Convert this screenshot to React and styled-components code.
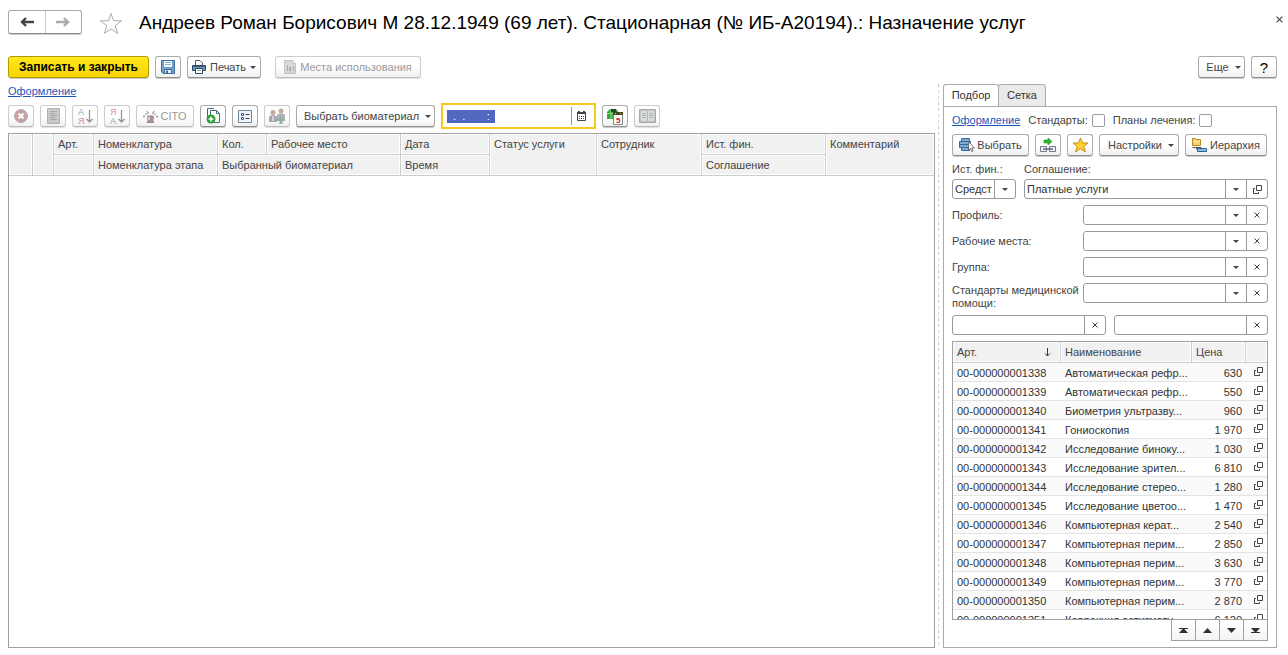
import React from 'react';
import styled, { createGlobalStyle, css } from 'styled-components';

const GlobalStyle = createGlobalStyle`
  * {
    box-sizing: border-box;
  }

  body {
    margin: 0;
    background: #fff;
    color: #444;
    font-family: 'Liberation Sans', Arial, sans-serif;
    font-size: 11px;
    line-height: 13px;
  }

  button,
  input,
  select {
    margin: 0;
    color: inherit;
    font: inherit;
  }

  svg {
    display: block;
    flex: none;
  }
`;

const Page = styled.div`
  display: flex;
  flex-direction: column;
  height: 100vh;
  padding: 10px 0 7px 8px;
`;

const Header = styled.header`
  display: flex;
  align-items: center;
  height: 26px;
  padding-right: 5px;
`;

const NavGroup = styled.div`
  display: flex;
  align-self: flex-start;
  width: 74px;
  height: 24px;
  border: 1px solid #a8a8a8;
  border-bottom-color: #8c8c8c;
  border-radius: 3px;
  box-shadow: 0 1px 0 #ccc;
`;

const NavButton = styled.button`
  display: flex;
  flex: 1;
  align-items: center;
  justify-content: center;
  padding: 0;
  border: 0;
  background: transparent;
  color: ${({ $muted }) => ($muted ? '#aaa' : '#444')};

  & + & {
    border-left: 1px solid #c8c8c8;
  }
`;

const PlainButton = styled.button`
  display: flex;
  padding: 0;
  border: 0;
  background: transparent;
`;

const Title = styled.h1`
  flex: 1;
  margin: 0 0 0 16px;
  color: #000;
  font-size: 19px;
  font-weight: 400;
  line-height: 24px;
  white-space: nowrap;
`;

const FavoriteButton = styled(PlainButton)`
  margin-left: 17px;
`;

const CloseButton = styled(PlainButton)`
  align-self: flex-start;
  padding-top: 6px;
`;

const CommandBar = styled.div`
  display: flex;
  align-items: center;
  gap: 6px;
  margin-top: 20px;
  padding-right: 11px;
`;

const Spacer = styled.span`
  flex: ${({ $size }) => ($size ? `0 0 ${$size}px` : '1')};
`;

const Button = styled.button`
  display: flex;
  flex: none;
  align-items: center;
  justify-content: center;
  gap: ${({ $gap = 4 }) => $gap}px;
  width: ${({ $width = 26 }) => $width}px;
  height: 22px;
  padding: 0;
  border: 1px solid #aaa;
  border-bottom-color: #8e8e8e;
  border-radius: 3px;
  background: linear-gradient(#fff 50%, #f0f0f0);
  box-shadow: 0 1px 0 #ccc;
  white-space: nowrap;

  &:disabled {
    border-color: #ccc;
    border-bottom-color: #bbb;
    box-shadow: 0 1px 0 #e4e4e4;
    color: #999;
  }

  &:disabled svg {
    opacity: 0.5;
  }

  ${({ $primary }) =>
    $primary &&
    css`
      border-color: #b09a00;
      background: linear-gradient(#ffe81a, #f5d400);
      color: #000;
      font-size: 12px;
      font-weight: 700;
    `}
`;

const MenuButton = styled(Button)`
  gap: 6px;
  padding-left: 4px;
`;

const HelpButton = styled(Button)`
  color: #000;
  font-size: 15px;
`;

const Link = styled.a`
  color: #1a56b8;
  text-decoration: underline;
`;

const Content = styled.main`
  display: flex;
  flex: 1;
  min-height: 0;
  margin-top: 6px;
  padding-right: 11px;
`;

const Services = styled.section`
  display: flex;
  flex: 1;
  flex-direction: column;
  min-width: 0;
  padding-top: 1px;
`;

const ServicesBar = styled.div`
  display: flex;
  align-items: center;
  gap: 6px;
  height: 28px;
  margin: 4px 0 3px;
`;

const DateField = styled.div`
  display: flex;
  align-items: center;
  width: 155px;
  height: 26px;
  padding-left: 4px;
  border: 2px solid #f8c81c;
`;

const DateInput = styled.input`
  width: 48px;
  height: 13px;
  padding: 0;
  border: 0;
  outline: 0;
  background: #5068c0;
  color: #fff;
`;

const DateButton = styled(PlainButton)`
  align-items: center;
  justify-content: center;
  width: 23px;
  height: 18px;
  margin-left: auto;
  padding-right: 4px;
  border-left: 1px solid #999;
  color: #444;
`;

const TableBox = styled.div`
  flex: 1;
  min-height: 0;
  overflow: hidden;
  border: 1px solid #a0a0a0;
`;

const Table = styled.table`
  width: 100%;
  border-collapse: separate;
  border-spacing: 0;
  table-layout: fixed;
`;

const HeadCell = styled.th`
  height: 21px;
  padding: 4px 4px 3px;
  overflow: hidden;
  border-right: 1px solid #ccc;
  border-bottom: 1px solid #ccc;
  background: #f1f1f1;
  box-shadow: inset 0 0 0 1px #fff;
  font-weight: 400;
  text-align: left;
  vertical-align: top;
  white-space: nowrap;

  &:last-child {
    border-right-width: ${({ $open }) => ($open ? 1 : 0)}px;
  }
`;

const SortHead = styled.span`
  display: flex;
  align-items: center;
  justify-content: space-between;
  padding-right: 5px;
`;

const BodyRow = styled.tr`
  background: #fff;

  &:nth-child(odd) {
    background: #fafafa;
  }
`;

const Cell = styled.td`
  height: 19px;
  padding: 2px 4px 0;
  border-bottom: 1px solid #e4e4e4;
  color: #333;
  text-align: ${({ $align = 'left' }) => $align};
  white-space: nowrap;
`;

const IconCell = styled(Cell)`
  padding: 4px 0 0 8px;
  vertical-align: top;
`;

const Splitter = styled.div`
  width: 9px;
  margin-right: -1px;
  background: repeating-linear-gradient(#ccc 0 3px, transparent 3px 6px) 3px 0 / 1px 100% no-repeat;
`;

const Picker = styled.aside`
  display: flex;
  flex: 0 0 334px;
  flex-direction: column;
`;

const Tabs = styled.div`
  display: flex;
  height: 23px;
  margin-bottom: -1px;
`;

const Tab = styled.button`
  width: ${({ $width }) => $width}px;
  padding: 0;
  border: 1px solid #aaa;
  border-bottom-color: ${({ $active }) => ($active ? '#fff' : '#aaa')};
  border-radius: 3px 3px 0 0;
  background: ${({ $active }) => ($active ? '#fff' : '#eaeaea')};
  color: #333;

  & + & {
    margin-left: -1px;
  }
`;

const PickerBody = styled.div`
  display: flex;
  flex: 1;
  flex-direction: column;
  min-height: 0;
  padding: 7px 8px 6px;
  border: 1px solid #aaa;
`;

const PickerRow = styled.div`
  display: flex;
  align-items: center;
  gap: ${({ $gap = 6 }) => $gap}px;
  margin-bottom: ${({ $below = 7 }) => $below}px;
`;

const Check = styled.label`
  display: flex;
  align-items: center;
  gap: 4px;

  input {
    width: 13px;
    height: 13px;
    border: 1px solid #999;
    border-radius: 2px;
    appearance: none;
  }
`;

const Stack = styled.div`
  flex: ${({ $width }) => ($width ? `0 0 ${$width}px` : '1')};

  > label {
    display: block;
    margin-bottom: 3px;
  }
`;

const FieldRow = styled.div`
  display: grid;
  grid-template-columns: 131px 1fr;
  align-items: start;
  height: 20px;
  margin-bottom: 6px;

  label {
    padding-top: ${({ $tall }) => ($tall ? 1 : 4)}px;
    white-space: pre-line;
  }
`;

const FieldBox = styled.div`
  display: flex;
  flex: 1;
  height: 20px;
  border: 1px solid #999;
  border-radius: 3px;
  background: #fff;

  input {
    flex: 1;
    width: 0;
    min-width: 0;
    padding: 0 2px;
    border: 0;
    background: transparent;
    color: #333;
  }

  button {
    display: flex;
    flex: 0 0 21px;
    align-items: center;
    justify-content: center;
    padding: 0;
    border: 0;
    border-left: 1px solid #999;
    background: transparent;
    color: #444;
  }
`;

const SearchRow = styled.div`
  display: flex;
  gap: 8px;
  margin: 6px 0;
`;

const Pager = styled.div`
  display: flex;
  align-self: flex-end;
  margin-top: -1px;
`;

const PagerButton = styled.button`
  display: flex;
  align-items: center;
  justify-content: center;
  width: 25px;
  height: 22px;
  padding: 0;
  border: 1px solid #a0a0a0;
  background: linear-gradient(#fff, #f4f4f4);
  color: #333;

  & + & {
    margin-left: -1px;
  }
`;

const Arrow = ({ flip }) => (
  <svg width="14" height="10" viewBox="0 0 14 10" fill="none" stroke="currentColor" strokeWidth="2.4">
    <path d={flip ? 'M0 5h12M8 1l4 4-4 4' : 'M14 5H2M6 1L2 5l4 4'} />
  </svg>
);

const Caret = () => (
  <svg width="6" height="3" viewBox="0 0 6 3" fill="currentColor">
    <path d="M0 0h6L3 3z" />
  </svg>
);

const Cross = ({ size = 6 }) => (
  <svg width={size} height={size} viewBox="0 0 6 6" stroke="currentColor" strokeWidth="1">
    <path d="M.5.5l5 5M5.5.5l-5 5" />
  </svg>
);

const OpenIcon = () => (
  <svg width="9" height="9" viewBox="0 0 9 9" fill="none" stroke="#444">
    <path d="M3.5.5h5v5h-5zM2 3.5H.5v5h5V7" />
  </svg>
);

const StarOutline = () => (
  <svg width="24" height="23" viewBox="0 0 24 23" fill="none" stroke="#aaa">
    <path d="M12 1.5l2.6 7.3h8l-6.4 4.9 2.4 7.8-6.6-4.6-6.6 4.6 2.4-7.8-6.4-4.9h8z" />
  </svg>
);

const SaveIcon = () => (
  <svg width="14" height="14" viewBox="0 0 14 14">
    <path d="M.5.5h13v13H2l-1.500-1.500z" fill="#6f9fcd" stroke="#3f6d9c" />
    <path d="M3 1h8v6H3z" fill="#f4f8fb" />
    <path d="M4 2.500h6M4 4.500h6" stroke="#8fb3cf" />
    <path d="M3.500 9.500h7v4h-7z" fill="#e6eef5" stroke="#3f6d9c" />
    <path d="M5 10.500h2v3H5z" fill="#3f6d9c" />
  </svg>
);

const PrintIcon = () => (
  <svg width="14" height="14" viewBox="0 0 14 14">
    <path d="M3.500 5V.5h4.500l2.500 2.500v2" fill="#fff" stroke="#4a5c6c" />
    <path d="M.5 5.500h13v5H.5z" fill="#6e96b8" stroke="#2f4c66" />
    <path d="M1 6.500h12" stroke="#3f6080" />
    <path d="M3.500 8.500h7v5h-7z" fill="#fff" stroke="#2f4c66" />
    <path d="M5 10.500h4" stroke="#9ab" />
  </svg>
);

const ReportIcon = () => (
  <svg width="12" height="14" viewBox="0 0 12 14">
    <path d="M.5.5h8l3 3v10H.5z" fill="#b4b8bc" stroke="#888" />
    <path d="M8.500.5v3h3" fill="#fff" stroke="#888" />
    <path d="M3 5h1v6H3zM9 6h1v5H9z" fill="#a33" />
    <path d="M5 7h2v4H5z" fill="#555" />
  </svg>
);

const CancelIcon = () => (
  <svg width="14" height="14" viewBox="0 0 14 14">
    <circle cx="7" cy="7" r="6.5" fill="#8c4a4a" stroke="#776060" />
    <path d="M4.500 4.500l5 5M9.500 4.500l-5 5" stroke="#fff" strokeWidth="2" />
  </svg>
);

const ListIcon = () => (
  <svg width="13" height="16" viewBox="0 0 13 16">
    <path d="M.5.5h12v15H.5z" fill="#999" stroke="#666" />
    <path d="M3 3.500h7M3 5.500h5M3 7.500h7M3 9.500h5M3 11.500h7" stroke="#555" />
  </svg>
);

const SortIcon = ({ reverse }) => (
  <svg width="16" height="18" viewBox="0 0 16 18">
    <g fontFamily="Liberation Sans" fontSize="9">
      <text x="1" y="8" fill={reverse ? '#a22' : '#246'}>
        {reverse ? 'Я' : 'А'}
      </text>
      <text x="1" y="17" fill={reverse ? '#246' : '#a22'}>
        {reverse ? 'А' : 'Я'}
      </text>
    </g>
    <path d="M12.500 3v12M9.500 12l3 3 3-3" fill="none" stroke="#222" strokeWidth="1.200" />
  </svg>
);

const SirenIcon = () => (
  <svg width="15" height="13" viewBox="0 0 15 13">
    <path d="M4 6c2-1 5-1 7 0l-.5 5 1 2h-8l1-2z" fill="#4c2a2a" />
    <path d="M5 7h2v3H5z" fill="#c99" />
    <path d="M4 1l1.500 3M11 1L9.500 4M2.500 3.500l1 1.500M12.500 3.500l-1 1.500M0 6.500h2M13 6.500h2" stroke="#333" strokeWidth="1.300" />
  </svg>
);

const AddCopyIcon = () => (
  <svg width="15" height="16" viewBox="0 0 15 16">
    <path d="M1.500 12V.5h6l1 1" fill="none" stroke="#4a6a80" />
    <path d="M4.500 2.500h6l3 3v9h-9z" fill="#fff" stroke="#4a6a80" />
    <path d="M10.500 2.500v3h3" fill="none" stroke="#4a6a80" />
    <circle cx="5" cy="11" r="4.500" fill="#27a033" />
    <path d="M5 8.500v5M2.500 11h5" stroke="#fff" strokeWidth="1.500" />
  </svg>
);

const FormIcon = () => (
  <svg width="14" height="13" viewBox="0 0 14 13">
    <path d="M.5.5h13v12H.5z" fill="#f0f4f8" stroke="#6c86a0" />
    <path d="M3.500 3.500h2v2h-2zM3.500 7.500h2v2h-2z" fill="#fff" stroke="#3d5cb0" />
    <path d="M7.500 4.500h4M7.500 8.500h4" stroke="#444" />
  </svg>
);

const PeopleIcon = () => (
  <svg width="17" height="16" viewBox="0 0 17 16">
    <circle cx="4" cy="4.500" r="2.500" fill="#96513d" />
    <path d="M0 14V9c0-1 2-2 4-2s4 1 4 2v5z" fill="#556" />
    <path d="M3.500 8h1v5h-1z" fill="#fff" />
    <circle cx="12" cy="3" r="2.500" fill="#96513d" />
    <path d="M8 12V7c0-1 2-1.500 4-1.500S16 6 16 7v5z" fill="#667" />
    <path d="M10.500 8.500h3V11H16v2h-2.500v3h-3v-3H8v-2h2.500z" fill="#2b6c4b" />
  </svg>
);

const CalendarIcon = () => (
  <svg width="9" height="10" viewBox="0 0 9 10">
    <path d="M.5 1.500h8v8h-8z" fill="#fff" stroke="#444" />
    <path d="M0 1h9v2H0zM1 0h2v2H1zM6 0h2v2H6z" fill="#444" />
    <path d="M2 5.500h5M2 7.500h5" stroke="#444" strokeDasharray="1 1" />
  </svg>
);

const PlanIcon = () => (
  <svg width="16" height="17" viewBox="0 0 16 17">
    <path d="M0 4l3-3h6l2 2v8H0z" fill="#35a647" />
    <path d="M0 5.500h8M4 1.500v9.500" stroke="#8be36d" />
    <path d="M4 1h5v3H4z" fill="#35401c" />
    <path d="M6.500 5.500h9v11h-9z" fill="#fff" stroke="#888" />
    <path d="M6 4h10v3H6z" fill="#47432b" />
    <path d="M8 5h1v1H8zM13 5h1v1h-1z" fill="#f2d23a" />
    <text x="9" y="15" fill="#c22" fontFamily="Liberation Sans" fontSize="8" fontWeight="700">
      5
    </text>
  </svg>
);

const BookIcon = () => (
  <svg width="17" height="14" viewBox="0 0 17 14">
    <path d="M.5.5h16v13H.5z" fill="#8a8c88" stroke="#556" />
    <path d="M2 2h6v10H2zM9 2h6v10H9z" fill="#b4c0bc" />
    <path d="M3 4.500h4M3 6.500h4M3 8.500h4M10 4.500h4M10 6.500h4M10 8.500h4" stroke="#667" />
    <path d="M8.500 1v12" stroke="#a55" />
  </svg>
);

const SelectIcon = () => (
  <svg width="16" height="14" viewBox="0 0 16 14">
    <path d="M2.500 .5h8v3h-8zM.5 3.500h11v3H.5zM.5 6.500h9v3h-9zM2.500 9.500h8v3h-8z" fill="#7fabd4" stroke="#37699a" />
    <path d="M9.500 3.500v8.500l2-1.500 1.200 3 1.300-.6-1.200-2.900h2.700z" fill="#fff" stroke="#555" strokeWidth=".8" />
  </svg>
);

const TransferIcon = () => (
  <svg width="16" height="15" viewBox="0 0 16 15">
    <path d="M4 2h4V0l4 3.500L8 7V5H4z" fill="#2fb82f" stroke="#168a16" strokeWidth=".6" />
    <path d="M.5 8.500h6v5h-6zM9.500 8.500h6v5h-6z" fill="#eef" stroke="#778" />
    <path d="M3 11h10" stroke="#667" strokeWidth="1.500" />
  </svg>
);

const StarIcon = () => (
  <svg width="17" height="16" viewBox="0 0 17 16">
    <path d="M8.500 1l2.100 5h5.400l-4.300 3.500 1.700 5.500-4.900-3.300L3.600 15l1.700-5.500L1 6h5.400z" fill="#ffd22e" stroke="#c68e10" />
  </svg>
);

const TreeIcon = () => (
  <svg width="16" height="15" viewBox="0 0 16 15">
    <path d="M.5 .5h3l1 1h4v6h-8z" fill="#f5cf67" stroke="#b98a20" />
    <path d="M1 3.500h7" stroke="#fff0b0" />
    <path d="M.5 9.500h9M4.500 9.500v2" fill="none" stroke="#555" />
    <path d="M5.500 10.500h9v3h-9z" fill="#8db6dc" stroke="#2f6494" />
  </svg>
);

const PagerIcon = ({ down, edge }) => (
  <svg width="11" height="7" viewBox="0 0 11 7" fill="currentColor">
    <path d={down ? 'M1 1h9L5.500 6z' : 'M1 6h9L5.500 1z'} />
    {edge && <path d={down ? 'M1 5h9v1H1z' : 'M1 1h9v1H1z'} />}
  </svg>
);

const SortArrow = () => (
  <svg width="7" height="9" viewBox="0 0 7 9" fill="none" stroke="#333">
    <path d="M3.500 0v8M1 5.500l2.500 2.500L6 5.500" />
  </svg>
);

const Field = ({ id, value = '', drop, action, label }) => (
  <FieldBox>
    <input id={id} type="text" defaultValue={value} aria-label={label} />
    {drop && (
      <button type="button" aria-label="Открыть список">
        <Caret />
      </button>
    )}
    {action && (
      <button type="button" aria-label={action === 'open' ? 'Открыть' : 'Очистить'}>
        {action === 'open' ? <OpenIcon /> : <Cross />}
      </button>
    )}
  </FieldBox>
);

const filters = [
  { id: 'profile', label: 'Профиль:' },
  { id: 'workplaces', label: 'Рабочие места:' },
  { id: 'group', label: 'Группа:' },
  { id: 'standards', label: 'Стандарты медицинской\nпомощи:', tall: true },
];

const services = [
  ['00-000000001338', 'Автоматическая рефр...', '630'],
  ['00-000000001339', 'Автоматическая рефр...', '550'],
  ['00-000000001340', 'Биометрия ультразву...', '960'],
  ['00-000000001341', 'Гониоскопия', '1 970'],
  ['00-000000001342', 'Исследование биноку...', '1 030'],
  ['00-000000001343', 'Исследование зрител...', '6 810'],
  ['00-000000001344', 'Исследование стерео...', '1 280'],
  ['00-000000001345', 'Исследование цветоо...', '1 470'],
  ['00-000000001346', 'Компьютерная керат...', '2 540'],
  ['00-000000001347', 'Компьютерная перим...', '2 850'],
  ['00-000000001348', 'Компьютерная перим...', '3 630'],
  ['00-000000001349', 'Компьютерная перим...', '3 770'],
  ['00-000000001350', 'Компьютерная перим...', '2 870'],
  ['00-000000001351', 'Коррекция астигмату...', '6 120'],
];

const assignedWidths = [24, 21, 40, 124, 49, 134, 89, 107, 105, 124];

const AssignedTable = () => (
  <TableBox>
    <Table>
      <colgroup>
        {assignedWidths.map((w, i) => (
          <col key={i} width={w} />
        ))}
        <col />
      </colgroup>
      <thead>
        <tr>
          <HeadCell rowSpan={2} />
          <HeadCell rowSpan={2} />
          <HeadCell>Арт.</HeadCell>
          <HeadCell>Номенклатура</HeadCell>
          <HeadCell>Кол.</HeadCell>
          <HeadCell>Рабочее место</HeadCell>
          <HeadCell>Дата</HeadCell>
          <HeadCell rowSpan={2}>Статус услуги</HeadCell>
          <HeadCell rowSpan={2}>Сотрудник</HeadCell>
          <HeadCell>Ист. фин.</HeadCell>
          <HeadCell rowSpan={2}>Комментарий</HeadCell>
        </tr>
        <tr>
          <HeadCell />
          <HeadCell>Номенклатура этапа</HeadCell>
          <HeadCell colSpan={2}>Выбранный биоматериал</HeadCell>
          <HeadCell>Время</HeadCell>
          <HeadCell $open>Соглашение</HeadCell>
        </tr>
      </thead>
    </Table>
  </TableBox>
);

const ServiceTable = () => (
  <TableBox>
    <Table>
      <colgroup>
        <col width={108} />
        <col width={131} />
        <col width={54} />
        <col />
      </colgroup>
      <thead>
        <tr>
          <HeadCell>
            <SortHead>
              Арт. <SortArrow />
            </SortHead>
          </HeadCell>
          <HeadCell>Наименование</HeadCell>
          <HeadCell>Цена</HeadCell>
          <HeadCell />
        </tr>
      </thead>
      <tbody>
        {services.map(([code, name, price]) => (
          <BodyRow key={code}>
            <Cell>{code}</Cell>
            <Cell>{name}</Cell>
            <Cell $align="right">{price}</Cell>
            <IconCell>
              <OpenIcon />
            </IconCell>
          </BodyRow>
        ))}
      </tbody>
    </Table>
  </TableBox>
);

const App = () => {
  return (
    <Page>
      <GlobalStyle />

      <Header>
        <NavGroup>
          <NavButton type="button" aria-label="Назад">
            <Arrow />
          </NavButton>
          <NavButton type="button" aria-label="Вперед" $muted>
            <Arrow flip />
          </NavButton>
        </NavGroup>
        <FavoriteButton type="button" aria-label="Избранное">
          <StarOutline />
        </FavoriteButton>
        <Title>Андреев Роман Борисович М 28.12.1949 (69 лет). Стационарная (№ ИБ-А20194).: Назначение услуг</Title>
        <CloseButton type="button" aria-label="Закрыть">
          <Cross size={7} />
        </CloseButton>
      </Header>

      <CommandBar>
        <Button type="button" $width={141} $primary>
          Записать и закрыть
        </Button>
        <Button type="button" aria-label="Записать">
          <SaveIcon />
        </Button>
        <Button type="button" $width={74}>
          <PrintIcon /> Печать <Caret />
        </Button>
        <Spacer $size={2} />
        <Button type="button" $width={146} disabled>
          <ReportIcon /> Места использования
        </Button>
        <Spacer />
        <MenuButton type="button" $width={47}>
          Еще <Caret />
        </MenuButton>
        <HelpButton type="button">?</HelpButton>
      </CommandBar>

      <Content>
        <Services>
          <div>
            <Link href="#design">Оформление</Link>
          </div>
          <ServicesBar>
            <Button type="button" aria-label="Отменить" disabled>
              <CancelIcon />
            </Button>
            <Button type="button" aria-label="Список" disabled>
              <ListIcon />
            </Button>
            <Button type="button" aria-label="По возрастанию" disabled>
              <SortIcon />
            </Button>
            <Button type="button" aria-label="По убыванию" disabled>
              <SortIcon reverse />
            </Button>
            <Button type="button" $width={58} $gap={2} disabled>
              <SirenIcon /> CITO
            </Button>
            <Button type="button" aria-label="Добавить">
              <AddCopyIcon />
            </Button>
            <Button type="button" aria-label="Форма">
              <FormIcon />
            </Button>
            <Button type="button" aria-label="Сотрудники" disabled>
              <PeopleIcon />
            </Button>
            <MenuButton type="button" $width={139}>
              Выбрать биоматериал <Caret />
            </MenuButton>
            <DateField>
              <DateInput type="text" aria-label="Дата" defaultValue="  .  .       :  " />
              <DateButton type="button" aria-label="Календарь">
                <CalendarIcon />
              </DateButton>
            </DateField>
            <Button type="button" aria-label="План">
              <PlanIcon />
            </Button>
            <Button type="button" aria-label="Журнал" disabled>
              <BookIcon />
            </Button>
          </ServicesBar>
          <AssignedTable />
        </Services>

        <Splitter />

        <Picker>
          <Tabs>
            <Tab type="button" $width={56} $active>
              Подбор
            </Tab>
            <Tab type="button" $width={48}>
              Сетка
            </Tab>
          </Tabs>
          <PickerBody>
            <PickerRow $gap={8}>
              <Link href="#picker-design">Оформление</Link>
              <Check>
                Стандарты: <input type="checkbox" />
              </Check>
              <Check>
                Планы лечения: <input type="checkbox" />
              </Check>
            </PickerRow>
            <PickerRow>
              <Button type="button" $width={77} $gap={2}>
                <SelectIcon /> Выбрать
              </Button>
              <Button type="button" aria-label="Перенести">
                <TransferIcon />
              </Button>
              <Button type="button" aria-label="В избранное">
                <StarIcon />
              </Button>
              <MenuButton type="button" $width={80}>
                Настройки <Caret />
              </MenuButton>
              <Button type="button" $width={82} $gap={2}>
                <TreeIcon /> Иерархия
              </Button>
            </PickerRow>
            <PickerRow $gap={8} $below={6}>
              <Stack $width={64}>
                <label htmlFor="finance">Ист. фин.:</label>
                <Field id="finance" value="Средства" drop />
              </Stack>
              <Stack>
                <label htmlFor="agreement">Соглашение:</label>
                <Field id="agreement" value="Платные услуги" drop action="open" />
              </Stack>
            </PickerRow>
            {filters.map(({ id, label, tall }) => (
              <FieldRow key={id} $tall={tall}>
                <label htmlFor={id}>{label}</label>
                <Field id={id} drop action="clear" />
              </FieldRow>
            ))}
            <SearchRow>
              <Field label="Поиск по артикулу" action="clear" />
              <Field label="Поиск по наименованию" action="clear" />
            </SearchRow>
            <ServiceTable />
            <Pager>
              <PagerButton type="button" aria-label="В начало">
                <PagerIcon edge />
              </PagerButton>
              <PagerButton type="button" aria-label="Вверх">
                <PagerIcon />
              </PagerButton>
              <PagerButton type="button" aria-label="Вниз">
                <PagerIcon down />
              </PagerButton>
              <PagerButton type="button" aria-label="В конец">
                <PagerIcon down edge />
              </PagerButton>
            </Pager>
          </PickerBody>
        </Picker>
      </Content>
    </Page>
  );
};

export default App;
